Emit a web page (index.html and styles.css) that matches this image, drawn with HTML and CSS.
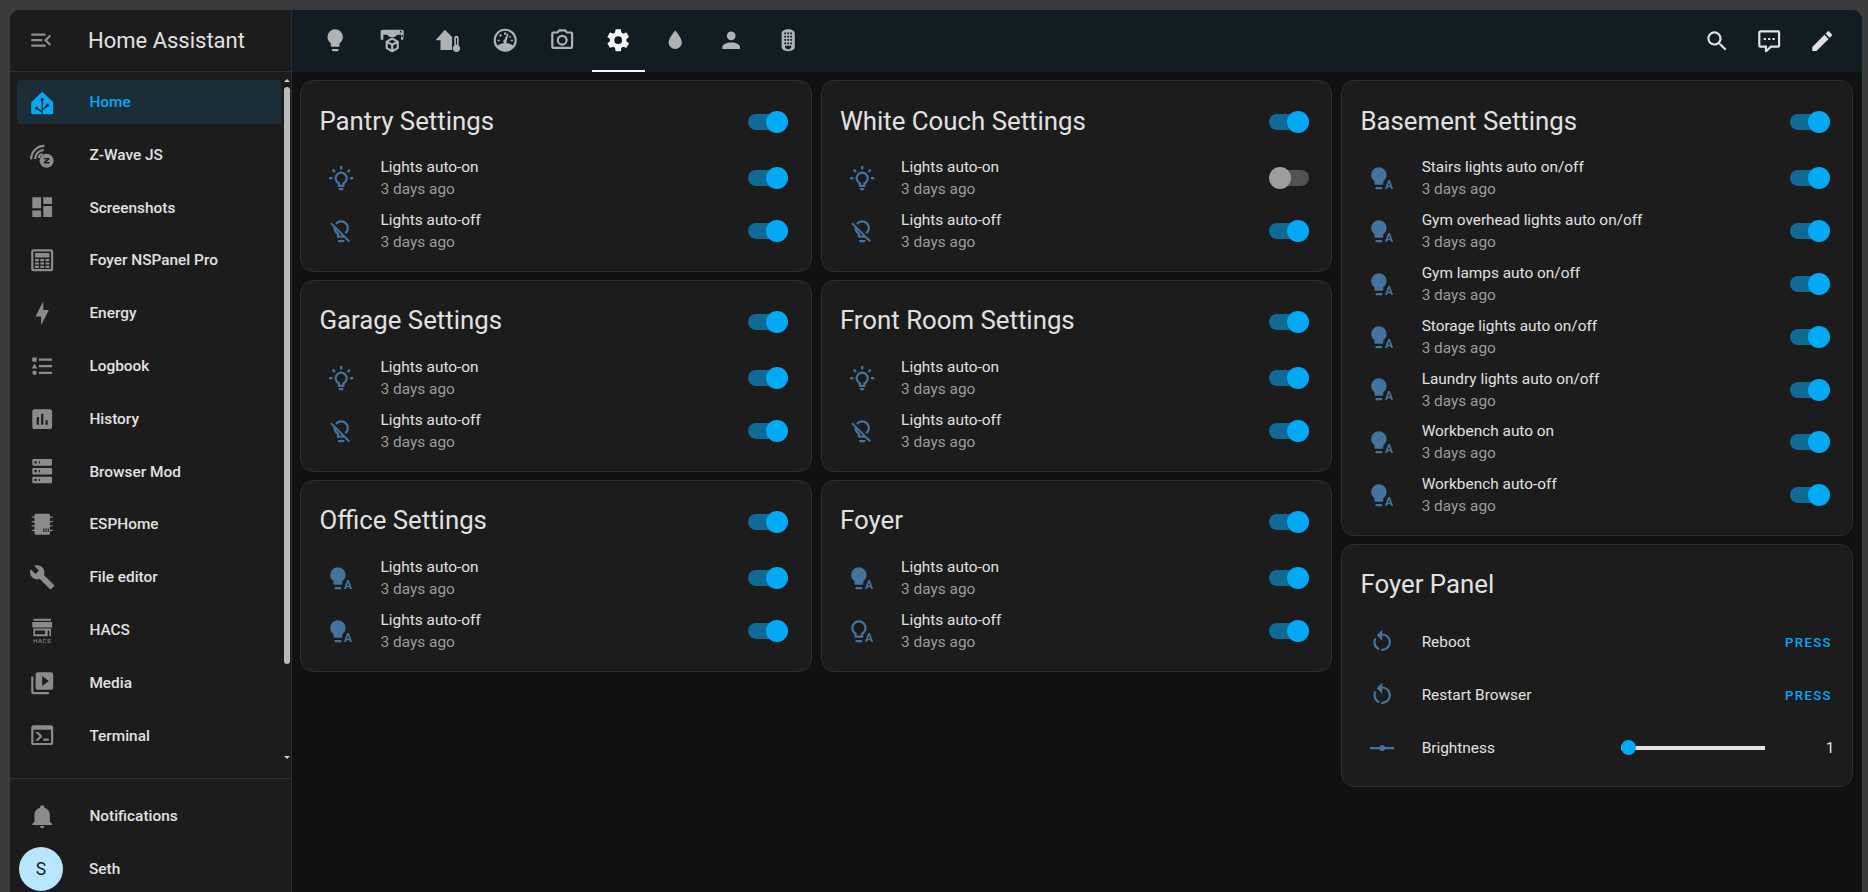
FILE: index.html
```html
<!DOCTYPE html>
<html lang="en">
<head>
    <meta charset="UTF-8">
    <meta name="viewport" content="width=device-width, initial-scale=1.0">
    <title>Home Assistant</title>
    <link rel="stylesheet" href="styles.css">
</head>
<body>
    <svg class="sprite">
        <symbol id="i-menu" viewBox="0 0 24 24"><path d="M21,15.61L19.59,17L14.58,12L19.59,7L21,8.39L17.44,12L21,15.61M3,6H16V8H3V6M3,13V11H13V13H3M3,18V16H16V18H3Z"/></symbol>
        <symbol id="i-ha" viewBox="0 0 24 24">
            <path d="M12 2.500L22 12V21.800A1.200 1.200 0 0 1 20.800 23H3.200A1.200 1.200 0 0 1 2 21.800V12Z"/>
            <path d="M12 9.500V23M7 17.500L12 21M17 14.800L12 19" fill="none" stroke="#1b2e38" stroke-width="1.200"/>
            <circle cx="12" cy="9.500" r="1.500" fill="#1b2e38"/><circle cx="7" cy="17.500" r="1.500" fill="#1b2e38"/><circle cx="17" cy="14.800" r="1.500" fill="#1b2e38"/>
        </symbol>
        <symbol id="i-zwave" viewBox="0 0 24 24">
            <path d="M2 16C2 9 7 3.500 14 3.500" fill="none" stroke="currentColor" stroke-width="2"/>
            <path d="M5.600 15.500C5.600 11 9 7.400 13.500 7.400" fill="none" stroke="currentColor" stroke-width="2"/>
            <path d="M9 14.500C9 12.700 10.500 11 12.500 11" fill="none" stroke="currentColor" stroke-width="2"/>
            <circle cx="16" cy="17" r="6.400"/>
            <path d="M13.400 14.500H18.600V15.800L15.700 18.200H18.600V19.500H13.400V18.200L16.300 15.800H13.400Z" fill="#1c1c1c"/>
        </symbol>
        <symbol id="i-dashboard" viewBox="0 0 24 24"><path d="M13,3V9H21V3M13,21H21V11H13M3,21H11V15H3M3,13H11V3H3V13Z"/></symbol>
        <symbol id="i-panel" viewBox="0 0 24 24"><path fill-rule="evenodd" d="M4 2H20A2 2 0 0 1 22 4V20A2 2 0 0 1 20 22H4A2 2 0 0 1 2 20V4A2 2 0 0 1 4 2ZM4.500 4A.5.5 0 0 0 4 4.500V19.500A.5.5 0 0 0 4.500 20H19.500A.5.5 0 0 0 20 19.500V4.500A.5.5 0 0 0 19.500 4ZM5.500 5.500H18.500V9.500H5.500ZM5.500 11H9V13H5.500ZM10.300 11H13.700V13H10.300ZM15 11H18.500V13H15ZM5.500 14H9V16H5.500ZM10.300 14H13.700V16H10.300ZM15 14H18.500V16H15ZM5.500 17H9V19H5.500ZM10.300 17H13.700V19H10.300ZM15 17H18.500V19H15Z"/></symbol>
        <symbol id="i-bolt" viewBox="0 0 24 24"><path d="M11 15H6L13 1V9H18L11 23V15Z"/></symbol>
        <symbol id="i-list" viewBox="0 0 24 24"><path d="M5,9.5L7.5,14H2.5L5,9.5M3,4H7V8H3V4M5,20A2,2 0 0,0 7,18A2,2 0 0,0 5,16A2,2 0 0,0 3,18A2,2 0 0,0 5,20M9,5V7H21V5H9M9,19H21V17H9V19M9,13H21V11H9V13Z"/></symbol>
        <symbol id="i-chart" viewBox="0 0 24 24"><path d="M19,3H5C3.9,3 3,3.9 3,5V19C3,20.1 3.9,21 5,21H19C20.1,21 21,20.1 21,19V5C21,3.9 20.1,3 19,3M9,17H7V10H9V17M13,17H11V7H13V17M17,17H15V13H17V17Z"/></symbol>
        <symbol id="i-server" viewBox="0 0 24 24"><path d="M4,1H20A1,1 0 0,1 21,2V6A1,1 0 0,1 20,7H4A1,1 0 0,1 3,6V2A1,1 0 0,1 4,1M4,9H20A1,1 0 0,1 21,10V14A1,1 0 0,1 20,15H4A1,1 0 0,1 3,14V10A1,1 0 0,1 4,9M4,17H20A1,1 0 0,1 21,18V22A1,1 0 0,1 20,23H4A1,1 0 0,1 3,22V18A1,1 0 0,1 4,17M9,5H10V3H9V5M9,13H10V11H9V13M9,21H10V19H9V21M5,3V5H7V3H5M5,11V13H7V11H5M5,19V21H7V19H5Z"/></symbol>
        <symbol id="i-chip" viewBox="0 0 24 24"><path fill-rule="evenodd" d="M6 2.500H18A1 1 0 0 1 19 3.500V5H21.500V6.200H19V9H21.500V10.200H19V13H21.500V14.200H19V17H21.500V18.200H19V20.500A1 1 0 0 1 18 21.500H6A1 1 0 0 1 5 20.500V18.200H2.500V17H5V14.200H2.500V13H5V10.200H2.500V9H5V6.200H2.500V5H5V3.500A1 1 0 0 1 6 2.500ZM13 16V19H14V16ZM15 16V19H16V16ZM17 16V19H18V16Z"/></symbol>
        <symbol id="i-wrench" viewBox="0 0 24 24"><path d="M22.7,19L13.6,9.9C14.5,7.6 14,4.9 12.1,3C10.1,1 7.1,0.6 4.7,1.7L9,6L6,9L1.6,4.7C0.4,7.1 0.9,10.1 2.9,12.1C4.8,14 7.5,14.5 9.8,13.6L18.9,22.7C19.3,23.1 19.9,23.1 20.3,22.7L22.6,20.4C23.1,20 23.1,19.3 22.7,19Z"/></symbol>
        <symbol id="i-hacs" viewBox="0 0 24 24">
            <path fill-rule="evenodd" d="M4 1.500H20V3.500H4ZM3 4.500H21V9.500H3ZM4 10.500H20V17.500H18.500V12.200H17V17.500H4ZM5.500 12.200V15.800H14.500V12.200Z"/>
            <text class="hacs-label" x="12" y="23.500" text-anchor="middle">HACS</text>
        </symbol>
        <symbol id="i-media" viewBox="0 0 24 24"><path d="M4,6H2V20A2,2 0 0,0 4,22H18V20H4M20,2H8A2,2 0 0,0 6,4V16A2,2 0 0,0 8,18H20A2,2 0 0,0 22,16V4A2,2 0 0,0 20,2M12,14.5V5.5L18,10L12,14.5Z"/></symbol>
        <symbol id="i-console" viewBox="0 0 24 24"><path d="M20,19V7H4V19H20M20,3A2,2 0 0,1 22,5V19A2,2 0 0,1 20,21H4A2,2 0 0,1 2,19V5C2,3.89 2.9,3 4,3H20M13,17V15H18V17H13M9.58,13L5.57,9H8.4L11.7,12.3C12.09,12.69 12.09,13.33 11.7,13.72L8.42,17H5.59L9.58,13Z"/></symbol>
        <symbol id="i-bell" viewBox="0 0 24 24"><path d="M21,19V20H3V19L5,17V11C5,7.9 7.03,5.17 10,4.29C10,4.19 10,4.1 10,4A2,2 0 0,1 12,2A2,2 0 0,1 14,4C14,4.1 14,4.19 14,4.29C16.97,5.17 19,7.9 19,11V17L21,19M14,21A2,2 0 0,1 12,23A2,2 0 0,1 10,21"/></symbol>

        <symbol id="i-bulb" viewBox="0 0 24 24"><path d="M12,2A7,7 0 0,0 5,9C5,11.38 6.19,13.47 8,14.74V17A1,1 0 0,0 9,18H15A1,1 0 0,0 16,17V14.74C17.81,13.47 19,11.38 19,9A7,7 0 0,0 12,2M9,21A1,1 0 0,0 10,22H14A1,1 0 0,0 15,21V20H9V21Z"/></symbol>
        <symbol id="i-printer" viewBox="0 0 24 24">
            <path fill-rule="evenodd" d="M3 2.500H21A1.500 1.500 0 0 1 22.500 4V9H20.500V7H16.500L14.500 9H9.500L7.500 7H4V11.500H2A1 1 0 0 1 1.500 10.500V4A1.500 1.500 0 0 1 3 2.500ZM19 3.500V5H20.500V3.500ZM20 11.500V7.500H22V11.500Z"/>
            <path fill="none" stroke="currentColor" stroke-width="2" stroke-linejoin="round" d="M12 10.500L17 13.300V19.200L12 22L7 19.200V13.300ZM7 13.300L12 16.200L17 13.300M12 16.200V22"/>
        </symbol>
        <symbol id="i-homethermo" viewBox="0 0 24 24">
            <path d="M9 2.500L15.500 9V21H5V12H.5Z"/>
            <path fill-rule="evenodd" d="M19.500 8A2 2 0 0 1 21.500 10V16.800A3.300 3.300 0 1 1 17.500 16.800V10A2 2 0 0 1 19.500 8ZM19 10V16H20V10Z"/>
        </symbol>
        <symbol id="i-gauge" viewBox="0 0 24 24">
            <path fill-rule="evenodd" d="M12 1.500A10.500 10.500 0 1 1 12 22.500A10.500 10.500 0 1 1 12 1.500ZM12 3.500A8.500 8.500 0 0 0 5 16.800C7 15.300 9.400 14.500 12 14.500S17 15.300 19 16.800A8.500 8.500 0 0 0 12 3.500Z"/>
            <path d="M11 5H13V7H11ZM6.500 7.300L8 6.300L9 8L7.500 9ZM17.500 9L16.300 7.800L15.500 8.800L16.800 10ZM5 11.500H7V13H5ZM17 11.500H19V13H17Z"/>
            <path d="M13.800 5.800L15 6.300L13.400 12.300A1.700 1.700 0 1 1 11.300 11.500Z"/>
        </symbol>
        <symbol id="i-camera" viewBox="0 0 24 24"><path d="M20,4H16.83L15,2H9L7.17,4H4A2,2 0 0,0 2,6V18A2,2 0 0,0 4,20H20A2,2 0 0,0 22,18V6A2,2 0 0,0 20,4M20,18H4V6H8.05L9.88,4H14.12L15.95,6H20V18M12,7A5,5 0 0,0 7,12A5,5 0 0,0 12,17A5,5 0 0,0 17,12A5,5 0 0,0 12,7M12,15A3,3 0 0,1 9,12A3,3 0 0,1 12,9A3,3 0 0,1 15,12A3,3 0 0,1 12,15Z"/></symbol>
        <symbol id="i-cog" viewBox="0 0 24 24"><path d="M12,15.5A3.5,3.5 0 0,1 8.5,12A3.5,3.5 0 0,1 12,8.5A3.5,3.5 0 0,1 15.5,12A3.5,3.5 0 0,1 12,15.5M19.43,12.97C19.47,12.65 19.5,12.33 19.5,12C19.5,11.67 19.47,11.34 19.43,11L21.54,9.37C21.73,9.22 21.78,8.95 21.66,8.73L19.66,5.27C19.54,5.05 19.27,4.96 19.05,5.05L16.56,6.05C16.04,5.66 15.5,5.32 14.87,5.07L14.5,2.42C14.46,2.18 14.25,2 14,2H10C9.75,2 9.54,2.18 9.5,2.42L9.13,5.07C8.5,5.32 7.96,5.66 7.44,6.05L4.95,5.05C4.73,4.96 4.46,5.05 4.34,5.27L2.34,8.73C2.21,8.95 2.27,9.22 2.46,9.37L4.57,11C4.53,11.34 4.5,11.67 4.5,12C4.5,12.33 4.53,12.65 4.57,12.97L2.46,14.63C2.27,14.78 2.21,15.05 2.34,15.27L4.34,18.73C4.46,18.95 4.73,19.03 4.95,18.95L7.44,17.94C7.96,18.34 8.5,18.68 9.13,18.93L9.5,21.58C9.54,21.82 9.75,22 10,22H14C14.25,22 14.46,21.82 14.5,21.58L14.87,18.93C15.5,18.67 16.04,18.34 16.56,17.94L19.05,18.95C19.27,19.03 19.54,18.95 19.66,18.73L21.66,15.27C21.78,15.05 21.73,14.78 21.54,14.63L19.43,12.97Z"/></symbol>
        <symbol id="i-water" viewBox="0 0 24 24"><path d="M12,20A6,6 0 0,1 6,14C6,10 12,3.25 12,3.25C12,3.25 18,10 18,14A6,6 0 0,1 12,20Z"/></symbol>
        <symbol id="i-account" viewBox="0 0 24 24"><path d="M12,4A4,4 0 0,1 16,8A4,4 0 0,1 12,12A4,4 0 0,1 8,8A4,4 0 0,1 12,4M12,14C16.42,14 20,15.79 20,18V20H4V18C4,15.79 7.58,14 12,14Z"/></symbol>
        <symbol id="i-remote" viewBox="0 0 24 24"><path fill-rule="evenodd" d="M12 2C15.500 2 18 3.500 18 6V18C18 20.500 15.500 22 12 22S6 20.500 6 18V6C6 3.500 8.500 2 12 2ZM8.500 5V6.600H10.100V5ZM11.200 5V6.600H12.800V5ZM13.900 5V6.600H15.500V5ZM8.500 8V9.600H10.100V8ZM11.200 8V9.600H12.800V8ZM13.900 8V9.600H15.500V8ZM8.500 11V12.600H10.100V11ZM11.200 11V12.600H12.800V11ZM13.900 11V12.600H15.500V11ZM8.500 14V15.600H10.100V14ZM11.200 14V15.600H12.800V14ZM13.900 14V15.600H15.500V14ZM9 17C9 19 10.300 20.200 12 20.200S15 19 15 17Z"/></symbol>
        <symbol id="i-search" viewBox="0 0 24 24"><path d="M9.5,3A6.5,6.5 0 0,1 16,9.5C16,11.11 15.41,12.59 14.44,13.73L14.71,14H15.5L20.5,19L19,20.5L14,15.5V14.71L13.73,14.44C12.59,15.41 11.11,16 9.5,16A6.5,6.5 0 0,1 3,9.5A6.5,6.5 0 0,1 9.5,3M9.5,5C7,5 5,7 5,9.5C5,12 7,14 9.5,14C12,14 14,12 14,9.5C14,7 12,5 9.5,5Z"/></symbol>
        <symbol id="i-comment" viewBox="0 0 24 24"><path d="M9,22A1,1 0 0,1 8,21V18H4A2,2 0 0,1 2,16V4C2,2.89 2.9,2 4,2H20A2,2 0 0,1 22,4V16A2,2 0 0,1 20,18H13.9L10.2,21.71C10,21.9 9.75,22 9.5,22H9M10,16V19.08L13.08,16H20V4H4V16H10M17,11H15V9H17V11M13,11H11V9H13V11M9,11H7V9H9V11Z"/></symbol>
        <symbol id="i-pencil" viewBox="0 0 24 24"><path d="M20.71,7.04C21.1,6.65 21.1,6 20.71,5.63L18.37,3.29C18,2.9 17.35,2.9 16.96,3.29L15.12,5.12L18.87,8.87M3,17.25V21H6.75L17.81,9.93L14.06,6.18L3,17.25Z"/></symbol>

        <symbol id="i-bulb-on" viewBox="0 0 24 24"><path d="M20,11H23V13H20V11M1,11H4V13H1V11M13,1V4H11V1H13M4.92,3.5L7.05,5.64L5.63,7.05L3.5,4.93L4.92,3.5M19.07,3.5L20.5,4.93L18.36,7.05L16.95,5.64L19.07,3.5M12,6A6,6 0 0,1 18,12C18,14.22 16.79,16.16 15,17.2V19A1,1 0 0,1 14,20H10A1,1 0 0,1 9,19V17.2C7.21,16.16 6,14.22 6,12A6,6 0 0,1 12,6M14,21V22A1,1 0 0,1 13,23H11A1,1 0 0,1 10,22V21H14M11,18H13V15.87C14.73,15.43 16,13.86 16,12A4,4 0 0,0 12,8A4,4 0 0,0 8,12C8,13.86 9.27,15.43 11,15.87V18Z"/></symbol>
        <symbol id="i-bulb-off" viewBox="0 0 24 24"><path d="M12,2C9.76,2 7.78,3.05 6.5,4.68L7.93,6.11C8.84,4.84 10.32,4 12,4A5,5 0 0,1 17,9C17,10.68 16.16,12.16 14.89,13.06L16.31,14.5C17.94,13.21 19,11.24 19,9A7,7 0 0,0 12,2M3.28,4L2,5.27L5.04,8.3C5,8.53 5,8.76 5,9C5,11.38 6.19,13.47 8,14.74V17A1,1 0 0,0 9,18H14.73L18.73,22L20,20.72L3.28,4M7.23,10.5L12.73,16H10V13.58C8.68,13 7.66,11.88 7.23,10.5M9,20V21A1,1 0 0,0 10,22H14A1,1 0 0,0 15,21V20H9Z"/></symbol>
        <symbol id="i-bulb-auto" viewBox="0 0 24 24">
            <path d="M9 2A7 7 0 0 0 2 9C2 11.380 3.190 13.470 5 14.740V17A1 1 0 0 0 6 18H12A1 1 0 0 0 13 17V14.740C14.810 13.470 16 11.380 16 9A7 7 0 0 0 9 2ZM6 20V22H12V20Z"/>
            <text class="auto-label" x="18.300" y="22">A</text>
        </symbol>
        <symbol id="i-bulb-auto-line" viewBox="0 0 24 24">
            <path fill-rule="evenodd" d="M9 2A7 7 0 0 0 2 9C2 11.380 3.190 13.470 5 14.740V17A1 1 0 0 0 6 18H12A1 1 0 0 0 13 17V14.740C14.810 13.470 16 11.380 16 9A7 7 0 0 0 9 2ZM9 4A5 5 0 0 1 14 9C14 10.700 13.100 12.300 11 13.600V16H7V13.600C4.900 12.300 4 10.700 4 9A5 5 0 0 1 9 4ZM6 20V22H12V20Z"/>
            <text class="auto-label" x="18.300" y="22">A</text>
        </symbol>
        <symbol id="i-restart" viewBox="0 0 24 24"><path d="M12,4C14.1,4 16.1,4.8 17.6,6.3C20.7,9.4 20.7,14.5 17.6,17.6C15.8,19.5 13.3,20.2 10.9,19.9L11.4,17.9C13.1,18.1 14.9,17.5 16.2,16.2C18.5,13.9 18.5,10.1 16.2,7.7C15.1,6.6 13.5,6 12,6V10.6L7,5.6L12,0.6V4M6.3,17.6C3.7,15 3.3,11 5.1,7.9L6.6,9.4C5.5,11.6 5.9,14.4 7.8,16.2C8.3,16.7 8.9,17.1 9.6,17.4L9,19.4C8,19 7.1,18.4 6.3,17.6Z"/></symbol>
        <symbol id="i-vertex" viewBox="0 0 24 24"><path d="M1 11H9.400C9.800 10 10.800 9.400 12 9.400S14.200 10 14.600 11H23V13H14.600C14.200 14 13.200 14.600 12 14.600S9.800 14 9.400 13H1Z"/></symbol>
    </svg>

    <div class="window">
        <aside class="sidebar">
            <div class="sidebar-header">
                <svg class="icon"><use href="#i-menu"/></svg>
                <span class="sidebar-title">Home Assistant</span>
            </div>
            <div class="sidebar-scroll">
                <nav class="nav-list">
                    <a class="nav-item active"><svg class="icon"><use href="#i-ha"/></svg>Home</a>
                    <a class="nav-item"><svg class="icon"><use href="#i-zwave"/></svg>Z-Wave JS</a>
                    <a class="nav-item"><svg class="icon"><use href="#i-dashboard"/></svg>Screenshots</a>
                    <a class="nav-item"><svg class="icon"><use href="#i-panel"/></svg>Foyer NSPanel Pro</a>
                    <a class="nav-item"><svg class="icon"><use href="#i-bolt"/></svg>Energy</a>
                    <a class="nav-item"><svg class="icon"><use href="#i-list"/></svg>Logbook</a>
                    <a class="nav-item"><svg class="icon"><use href="#i-chart"/></svg>History</a>
                    <a class="nav-item"><svg class="icon"><use href="#i-server"/></svg>Browser Mod</a>
                    <a class="nav-item"><svg class="icon"><use href="#i-chip"/></svg>ESPHome</a>
                    <a class="nav-item"><svg class="icon"><use href="#i-wrench"/></svg>File editor</a>
                    <a class="nav-item"><svg class="icon"><use href="#i-hacs"/></svg>HACS</a>
                    <a class="nav-item"><svg class="icon"><use href="#i-media"/></svg>Media</a>
                    <a class="nav-item"><svg class="icon"><use href="#i-console"/></svg>Terminal</a>
                </nav>
                <div class="scrollbar">
                    <span class="scroll-up"></span>
                    <span class="scroll-thumb"></span>
                    <span class="scroll-down"></span>
                </div>
            </div>
            <div class="sidebar-footer">
                <a class="nav-item"><svg class="icon"><use href="#i-bell"/></svg>Notifications</a>
                <a class="nav-item user"><span class="avatar">S</span>Seth</a>
            </div>
        </aside>

        <main class="main">
            <header class="topbar">
                <div class="tabs">
                    <span class="tab"><svg class="icon"><use href="#i-bulb"/></svg></span>
                    <span class="tab"><svg class="icon"><use href="#i-printer"/></svg></span>
                    <span class="tab"><svg class="icon"><use href="#i-homethermo"/></svg></span>
                    <span class="tab"><svg class="icon"><use href="#i-gauge"/></svg></span>
                    <span class="tab"><svg class="icon"><use href="#i-camera"/></svg></span>
                    <span class="tab active"><svg class="icon"><use href="#i-cog"/></svg></span>
                    <span class="tab"><svg class="icon"><use href="#i-water"/></svg></span>
                    <span class="tab"><svg class="icon"><use href="#i-account"/></svg></span>
                    <span class="tab"><svg class="icon"><use href="#i-remote"/></svg></span>
                </div>
                <div class="tools">
                    <svg class="icon"><use href="#i-search"/></svg>
                    <svg class="icon"><use href="#i-comment"/></svg>
                    <svg class="icon"><use href="#i-pencil"/></svg>
                </div>
            </header>

            <div class="columns">
                <div class="column">
                    <section class="card">
                        <div class="card-header"><h2>Pantry Settings</h2><span class="toggle on"></span></div>
                        <div class="row"><svg class="icon"><use href="#i-bulb-on"/></svg><div class="row-text"><div class="name">Lights auto-on</div><div class="when">3 days ago</div></div><span class="toggle on"></span></div>
                        <div class="row"><svg class="icon"><use href="#i-bulb-off"/></svg><div class="row-text"><div class="name">Lights auto-off</div><div class="when">3 days ago</div></div><span class="toggle on"></span></div>
                    </section>
                    <section class="card">
                        <div class="card-header"><h2>Garage Settings</h2><span class="toggle on"></span></div>
                        <div class="row"><svg class="icon"><use href="#i-bulb-on"/></svg><div class="row-text"><div class="name">Lights auto-on</div><div class="when">3 days ago</div></div><span class="toggle on"></span></div>
                        <div class="row"><svg class="icon"><use href="#i-bulb-off"/></svg><div class="row-text"><div class="name">Lights auto-off</div><div class="when">3 days ago</div></div><span class="toggle on"></span></div>
                    </section>
                    <section class="card">
                        <div class="card-header"><h2>Office Settings</h2><span class="toggle on"></span></div>
                        <div class="row"><svg class="icon"><use href="#i-bulb-auto"/></svg><div class="row-text"><div class="name">Lights auto-on</div><div class="when">3 days ago</div></div><span class="toggle on"></span></div>
                        <div class="row"><svg class="icon"><use href="#i-bulb-auto"/></svg><div class="row-text"><div class="name">Lights auto-off</div><div class="when">3 days ago</div></div><span class="toggle on"></span></div>
                    </section>
                </div>

                <div class="column">
                    <section class="card">
                        <div class="card-header"><h2>White Couch Settings</h2><span class="toggle on"></span></div>
                        <div class="row"><svg class="icon"><use href="#i-bulb-on"/></svg><div class="row-text"><div class="name">Lights auto-on</div><div class="when">3 days ago</div></div><span class="toggle"></span></div>
                        <div class="row"><svg class="icon"><use href="#i-bulb-off"/></svg><div class="row-text"><div class="name">Lights auto-off</div><div class="when">3 days ago</div></div><span class="toggle on"></span></div>
                    </section>
                    <section class="card">
                        <div class="card-header"><h2>Front Room Settings</h2><span class="toggle on"></span></div>
                        <div class="row"><svg class="icon"><use href="#i-bulb-on"/></svg><div class="row-text"><div class="name">Lights auto-on</div><div class="when">3 days ago</div></div><span class="toggle on"></span></div>
                        <div class="row"><svg class="icon"><use href="#i-bulb-off"/></svg><div class="row-text"><div class="name">Lights auto-off</div><div class="when">3 days ago</div></div><span class="toggle on"></span></div>
                    </section>
                    <section class="card">
                        <div class="card-header"><h2>Foyer</h2><span class="toggle on"></span></div>
                        <div class="row"><svg class="icon"><use href="#i-bulb-auto"/></svg><div class="row-text"><div class="name">Lights auto-on</div><div class="when">3 days ago</div></div><span class="toggle on"></span></div>
                        <div class="row"><svg class="icon"><use href="#i-bulb-auto-line"/></svg><div class="row-text"><div class="name">Lights auto-off</div><div class="when">3 days ago</div></div><span class="toggle on"></span></div>
                    </section>
                </div>

                <div class="column">
                    <section class="card">
                        <div class="card-header"><h2>Basement Settings</h2><span class="toggle on"></span></div>
                        <div class="row"><svg class="icon"><use href="#i-bulb-auto"/></svg><div class="row-text"><div class="name">Stairs lights auto on/off</div><div class="when">3 days ago</div></div><span class="toggle on"></span></div>
                        <div class="row"><svg class="icon"><use href="#i-bulb-auto"/></svg><div class="row-text"><div class="name">Gym overhead lights auto on/off</div><div class="when">3 days ago</div></div><span class="toggle on"></span></div>
                        <div class="row"><svg class="icon"><use href="#i-bulb-auto"/></svg><div class="row-text"><div class="name">Gym lamps auto on/off</div><div class="when">3 days ago</div></div><span class="toggle on"></span></div>
                        <div class="row"><svg class="icon"><use href="#i-bulb-auto"/></svg><div class="row-text"><div class="name">Storage lights auto on/off</div><div class="when">3 days ago</div></div><span class="toggle on"></span></div>
                        <div class="row"><svg class="icon"><use href="#i-bulb-auto"/></svg><div class="row-text"><div class="name">Laundry lights auto on/off</div><div class="when">3 days ago</div></div><span class="toggle on"></span></div>
                        <div class="row"><svg class="icon"><use href="#i-bulb-auto"/></svg><div class="row-text"><div class="name">Workbench auto on</div><div class="when">3 days ago</div></div><span class="toggle on"></span></div>
                        <div class="row"><svg class="icon"><use href="#i-bulb-auto"/></svg><div class="row-text"><div class="name">Workbench auto-off</div><div class="when">3 days ago</div></div><span class="toggle on"></span></div>
                    </section>
                    <section class="card panel-card">
                        <div class="card-header"><h2>Foyer Panel</h2></div>
                        <div class="row"><svg class="icon"><use href="#i-restart"/></svg><div class="row-text"><div class="name">Reboot</div></div><span class="press">PRESS</span></div>
                        <div class="row"><svg class="icon"><use href="#i-restart"/></svg><div class="row-text"><div class="name">Restart Browser</div></div><span class="press">PRESS</span></div>
                        <div class="row"><svg class="icon"><use href="#i-vertex"/></svg><div class="row-text"><div class="name">Brightness</div></div><span class="slider"></span><span class="value">1</span></div>
                    </section>
                </div>
            </div>
        </main>
    </div>
</body>
</html>
```

FILE: styles.css
```css
* {
    box-sizing: border-box;
}
html, body {
    height: 892px;
    overflow: hidden;
}
body {
    font-family: Roboto, sans-serif;
    margin: 0;
    padding: 10px 6px 0 10px;
    background-color: #3b3b3b;
    color: #e1e1e1;
}
.sprite {
    display: none;
}
.icon {
    width: 26.4px;
    height: 26.4px;
    flex: none;
    fill: currentColor;
}
.hacs-label {
    font-family: Roboto, sans-serif;
    font-size: 5.5px;
    font-weight: 500;
    letter-spacing: .5px;
}
.auto-label {
    font-family: Roboto, sans-serif;
    font-size: 11px;
    font-weight: 700;
    text-anchor: middle;
}
.window {
    display: flex;
    height: 882px;
    border-radius: 10px 10px 0 0;
    overflow: hidden;
    background-color: #111111;
}

/* sidebar */
.sidebar {
    width: 282px;
    flex: none;
    display: flex;
    flex-direction: column;
    background-color: #1c1c1c;
    border-right: 1px solid #2f2f2f;
}
.sidebar-header {
    height: 62px;
    flex: none;
    display: flex;
    align-items: center;
    padding-left: 18px;
    border-bottom: 1px solid #2f2f2f;
    color: #8f8f8f;
}
.sidebar-title {
    margin-left: 33.6px;
    font-size: 22px;
    color: #e1e1e1;
}
.sidebar-scroll {
    height: 706px;
    flex: none;
    display: flex;
}
.nav-list {
    flex: 1;
    display: flex;
    flex-direction: column;
    gap: 8.8px;
    padding: 8px 0 0 7px;
}
.nav-item {
    height: 44px;
    flex: none;
    display: flex;
    align-items: center;
    gap: 34px;
    padding-left: 12px;
    border-radius: 4px 0 0 4px;
    font-size: 15.4px;
    font-weight: 500;
    color: #e1e1e1;
}
.nav-item .icon {
    color: #8b8b8b;
}
.nav-item.active {
    background-color: #1b2e38;
    color: #03a9f4;
}
.nav-item.active .icon {
    color: #03a9f4;
}
.scrollbar {
    width: 9px;
    flex: none;
    margin-left: 1px;
    display: flex;
    flex-direction: column;
    align-items: center;
    padding-top: 7px;
}
.scroll-up {
    border: 3px solid transparent;
    border-top: 0;
    border-bottom-color: #cfcfcf;
}
.scroll-thumb {
    width: 6px;
    height: 577px;
    margin: 5px 0 92px;
    border-radius: 3px;
    background-color: #b9b9b9;
}
.scroll-down {
    border: 3px solid transparent;
    border-bottom: 0;
    border-top-color: #cfcfcf;
}
.sidebar-footer {
    flex: 1;
    display: flex;
    flex-direction: column;
    gap: 9px;
    padding: 15px 0 0 7px;
    border-top: 1px solid #2f2f2f;
}
.nav-item.user {
    gap: 26px;
    padding-left: 2px;
}
.avatar {
    width: 44px;
    height: 44px;
    display: flex;
    align-items: center;
    justify-content: center;
    border-radius: 50%;
    background-color: #b8e6ff;
    color: #1c1c1c;
    font-size: 17.6px;
    font-weight: 400;
}

/* top bar */
.main {
    flex: 1;
    min-width: 0;
    display: flex;
    flex-direction: column;
}
.topbar {
    height: 62px;
    flex: none;
    display: flex;
    justify-content: space-between;
    padding: 0 26.800px 0 17px;
    background-color: #111d23;
}
.tabs {
    display: flex;
    gap: 3.6px;
}
.tab {
    width: 53px;
    display: flex;
    align-items: center;
    justify-content: center;
    padding-top: 1px;
    border-bottom: 2px solid transparent;
    color: #aeb4b6;
}
.tab.active {
    border-bottom-color: #f5f5f5;
    color: #f5f5f5;
}
.tools {
    display: flex;
    align-items: center;
    gap: 26.100px;
    color: #e1e1e1;
}

/* cards */
.columns {
    flex: 1;
    display: grid;
    grid-template-columns: repeat(3, 1fr);
    gap: 9px;
    align-items: start;
    padding: 8px 9px 0 8.4px;
}
.column {
    display: flex;
    flex-direction: column;
    gap: 8.4px;
    min-width: 0;
}
.card {
    padding-bottom: 13px;
    border: 1px solid #2e2e2e;
    border-radius: 13px;
    background-color: #1c1c1c;
}
.panel-card {
    padding-bottom: 12px;
}
.card-header {
    height: 71px;
    display: flex;
    align-items: center;
    justify-content: space-between;
    padding: 11.500px 22.500px .5px 18px;
}
.card-header h2 {
    margin: 0 0 3px;
    font-size: 25.800px;
    font-weight: 400;
    line-height: 32px;
}
.row {
    height: 52.8px;
    display: flex;
    align-items: center;
    padding: 0 22.500px 0 27px;
}
.row > .icon {
    color: #44739e;
}
.row-text {
    flex: 1;
    min-width: 0;
    margin-left: 25.800px;
    font-size: 15.4px;
    line-height: 22px;
}
.when {
    color: #9b9b9b;
}
.toggle {
    width: 40px;
    height: 22px;
    flex: none;
    position: relative;
}
.toggle::before {
    content: "";
    position: absolute;
    left: 0;
    right: 0;
    top: 3px;
    height: 16px;
    border-radius: 8px;
    background-color: #525252;
}
.toggle::after {
    content: "";
    position: absolute;
    left: 0;
    top: 0;
    width: 22px;
    height: 22px;
    border-radius: 50%;
    background-color: #9e9e9e;
}
.toggle.on::before {
    background-color: #0f6a96;
}
.toggle.on::after {
    left: 18px;
    background-color: #03a9f4;
}
.press {
    margin-right: -2.400px;
    color: #03a9f4;
    font-size: 13.200px;
    font-weight: 500;
    letter-spacing: 1.360px;
}
.slider {
    width: 144px;
    height: 15px;
    flex: none;
    background: linear-gradient(#e8e2e8, #e8e2e8) center / 100% 4px no-repeat;
    position: relative;
}
.slider::before {
    content: "";
    position: absolute;
    left: 0;
    top: 0;
    width: 15px;
    height: 15px;
    border-radius: 50%;
    background-color: #03a9f4;
}
.value {
    width: 70px;
    margin-right: -5px;
    text-align: right;
    font-size: 15.4px;
}
```
